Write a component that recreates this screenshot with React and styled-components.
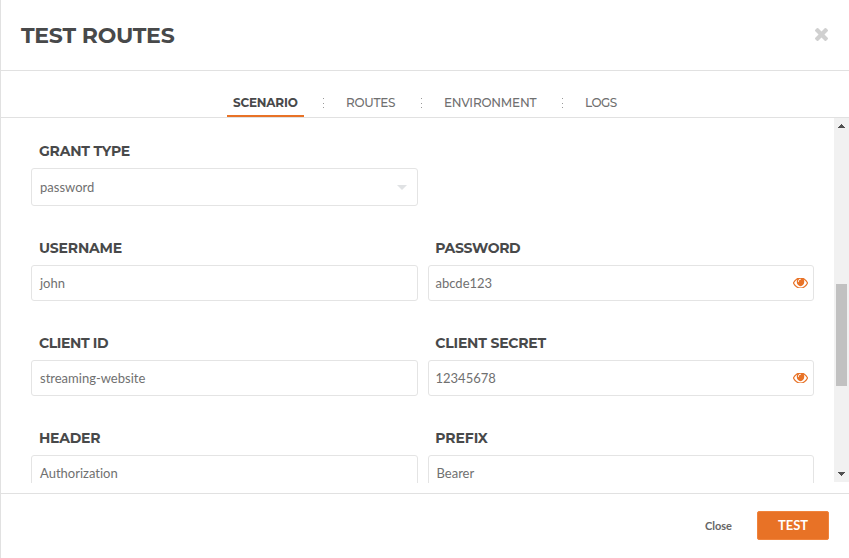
import React from "react";
import styled, { createGlobalStyle } from "styled-components";

const GlobalStyle = createGlobalStyle`
  * { box-sizing: border-box; }
  body { margin: 0; background: #fff; overflow: hidden; }
`;

const heading = `"Montserrat", "Inter", sans-serif`;
const line = "#e1e1e1";
const orange = "#e87226";

const Modal = styled.div`
  display: flex;
  flex-direction: column;
  width: 849px;
  height: 558px;
  border-left: 1px solid ${line};
  background: #fff;
  font-family: "Lato", sans-serif;
  font-variant-ligatures: none;
`;

const Header = styled.header`
  display: flex;
  align-items: center;
  justify-content: space-between;
  height: 71px;
  padding: 0 21px 0 20px;
  border-bottom: 1px solid ${line};
`;

const Title = styled.h1`
  margin: 2px 0 0;
  font: 700 22px/30px ${heading};
  letter-spacing: -0.25px;
  color: #48494a;
  white-space: nowrap;
`;

const IconButton = styled.button`
  display: flex;
  padding: 0;
  margin-bottom: ${(p) => p.$lift}px;
  border: 0;
  background: none;
  color: ${(p) => p.$color};
`;

const Tabs = styled.nav`
  display: flex;
  align-items: flex-end;
  height: 47px;
  padding-left: 226px;
  border-bottom: 1px solid ${line};
`;

const Tab = styled.a`
  flex: none;
  width: ${(p) => p.$width}px;
  height: 28px;
  padding-left: 6px;
  border-bottom: 2px solid ${(p) => (p.$active ? orange : "transparent")};
  font: ${(p) => (p.$active ? 700 : 500)} 12px/27px ${heading};
  letter-spacing: ${(p) => p.$spacing}px;
  color: ${(p) => (p.$active ? "#48494a" : "#707070")};
  white-space: nowrap;
`;

const Divider = styled.span`
  display: flex;
  flex-direction: column;
  justify-content: space-between;
  width: 1px;
  height: 10px;
  margin: 0 ${(p) => p.$after}px 9px 19px;
  &::before, &::after, & > i { content: ""; height: 1px; background: #9a9a9a; }
  &::before { order: -1; }
`;

const Body = styled.main`
  display: flex;
  height: 365px;
`;

const Form = styled.form`
  flex: 1;
  display: grid;
  grid-template-columns: 387px 386px;
  grid-template-rows: 97px 95px 95px 95px;
  column-gap: 10px;
  padding: 23px 0 0 30px;
  overflow: hidden;
`;

const Field = styled.label`
  display: block;
  grid-column: ${(p) => (p.$full ? "1 / -1" : "auto")};
  width: ${(p) => (p.$full ? "387px" : "auto")};
`;

const Label = styled.span`
  display: block;
  height: 27px;
  padding-left: ${(p) => p.$left}px;
  font: 700 14px/20px ${heading};
  letter-spacing: ${(p) => p.$spacing}px;
  color: #48494a;
  white-space: nowrap;
`;

const Control = styled.span`
  display: flex;
  align-items: center;
  justify-content: space-between;
  height: ${(p) => (p.$select ? 38 : 36)}px;
  padding: 0 ${(p) => (p.$select ? 10 : 5)}px 0 ${(p) => p.$left}px;
  border: 1px solid #e4e4e4;
  border-radius: 3px;
  font-size: 13px;
  line-height: 18px;
  color: #707070;
`;

const Scrollbar = styled.div`
  display: flex;
  flex-direction: column;
  align-items: center;
  width: 15px;
  height: 364px;
  padding: 6px 0;
  background: #f1f1f1;
`;

const Thumb = styled.div`
  width: 11px;
  height: 102px;
  margin: 156px 0 auto;
  background: #c1c1c1;
`;

const Footer = styled.footer`
  display: flex;
  align-items: center;
  justify-content: flex-end;
  height: 65px;
  margin-top: 10px;
  padding: 0 20px 0 0;
  border-top: 1px solid ${line};
`;

const CloseButton = styled.button`
  padding: 0;
  margin: 0 25px 0 0;
  border: 0;
  background: none;
  font: 700 11px/16px "Lato", sans-serif;
  color: #666;
`;

const TestButton = styled.button`
  width: 72px;
  height: 29px;
  margin-top: -1px;
  padding: 0;
  border: 1px solid #f0833c;
  border-radius: 2px;
  background: ${orange};
  color: #fff;
  font: 700 13px/25px "Lato", sans-serif;
`;

const Times = () => (
  <svg width="13" height="13" viewBox="302 366 1188 1188" fill="currentColor">
    <path d="M1490 1322q0 40-28 68l-136 136q-28 28-68 28t-68-28l-294-294-294 294q-28 28-68 28t-68-28l-136-136q-28-28-28-68t28-68l294-294-294-294q-28-28-28-68t28-68l136-136q28-28 68-28t68 28l294 294 294-294q28-28 68-28t68 28l136 136q28 28 28 68t-28 68l-294 294 294 294q28 28 28 68z" />
  </svg>
);

const Eye = () => (
  <svg width="15" height="10" viewBox="0 452 1792 1016" preserveAspectRatio="none" fill="currentColor">
    <path d="M1664 960q-152-236-381-353 61 104 61 225 0 185-131.5 316.5t-316.5 131.5-316.5-131.5-131.5-316.5q0-121 61-225-229 117-381 353 133 205 333.5 326.5t434.5 121.5 434.5-121.5 333.5-326.5zm-720-384q0-20-14-34t-34-14q-125 0-214.5 89.5t-89.5 214.5q0 20 14 34t34 14 34-14 14-34q0-86 61-147t147-61q20 0 34-14t14-34zm848 384q0 34-20 69-140 230-376.5 368.5t-499.5 138.5-499.5-139-376.5-368q-20-35-20-69t20-69q140-229 376.5-368t499.5-139 499.5 139 376.5 368q20 35 20 69z" />
  </svg>
);

const Caret = () => (
  <svg width="10" height="5" viewBox="0 0 10 5" fill="#e0e2e4">
    <path d="M0 0H10L5 5Z" />
  </svg>
);

const ScrollArrow = ({ down }) => (
  <svg width="7" height="4" viewBox="0 0 7 4" fill="#505050" shapeRendering="crispEdges">
    <path d={down ? "M0 0H7V1H6V2H5V3H4V4H3V3H2V2H1V1H0Z" : "M3 0H4V1H5V2H6V3H7V4H0V3H1V2H2V1H3Z"} />
  </svg>
);

const fields = [
  { label: "GRANT TYPE", value: "password", select: true, left: 8, spacing: -0.2 },
  { label: "USERNAME", value: "john", left: 8, spacing: -0.18 },
  { label: "PASSWORD", value: "abcde123", secret: true, left: 6.5, labelLeft: 7.3, spacing: -0.35 },
  { label: "CLIENT ID", value: "streaming-website", left: 8, spacing: -0.4 },
  { label: "CLIENT SECRET", value: "12345678", secret: true, left: 6.5, labelLeft: 7.3, spacing: -0.2 },
  { label: "HEADER", value: "Authorization", left: 8, spacing: -0.25 },
  { label: "PREFIX", value: "Bearer", left: 7.5, labelLeft: 7.3, spacing: -0.1 },
];

export default function App() {
  return (
    <>
      <GlobalStyle />
      <Modal>
        <Header>
          <Title>TEST ROUTES</Title>
          <IconButton $color="#d0d0d0" $lift={1} aria-label="Close dialog"><Times /></IconButton>
        </Header>
        <Tabs>
          <Tab $active $width={77} $spacing={-0.2}>SCENARIO</Tab>
          <Divider $after={16}><i /></Divider>
          <Tab $width={62} $spacing={-0.22}>ROUTES</Tab>
          <Divider $after={16}><i /></Divider>
          <Tab $width={105} $spacing={-0.2}>ENVIRONMENT</Tab>
          <Divider $after={16}><i /></Divider>
          <Tab $width={50} $spacing={-0.5}>LOGS</Tab>
        </Tabs>
        <Body>
          <Form>
            {fields.map((f) => (
              <Field key={f.label} $full={f.select}>
                <Label $left={f.labelLeft ?? f.left} $spacing={f.spacing}>{f.label}</Label>
                <Control $select={f.select} $left={f.left}>
                  {f.value}
                  {f.select && <Caret />}
                  {f.secret && <IconButton as="span" $color={orange} $lift={0}><Eye /></IconButton>}
                </Control>
              </Field>
            ))}
          </Form>
          <Scrollbar>
            <ScrollArrow />
            <Thumb />
            <ScrollArrow down />
          </Scrollbar>
        </Body>
        <Footer>
          <CloseButton>Close</CloseButton>
          <TestButton>TEST</TestButton>
        </Footer>
      </Modal>
    </>
  );
}
